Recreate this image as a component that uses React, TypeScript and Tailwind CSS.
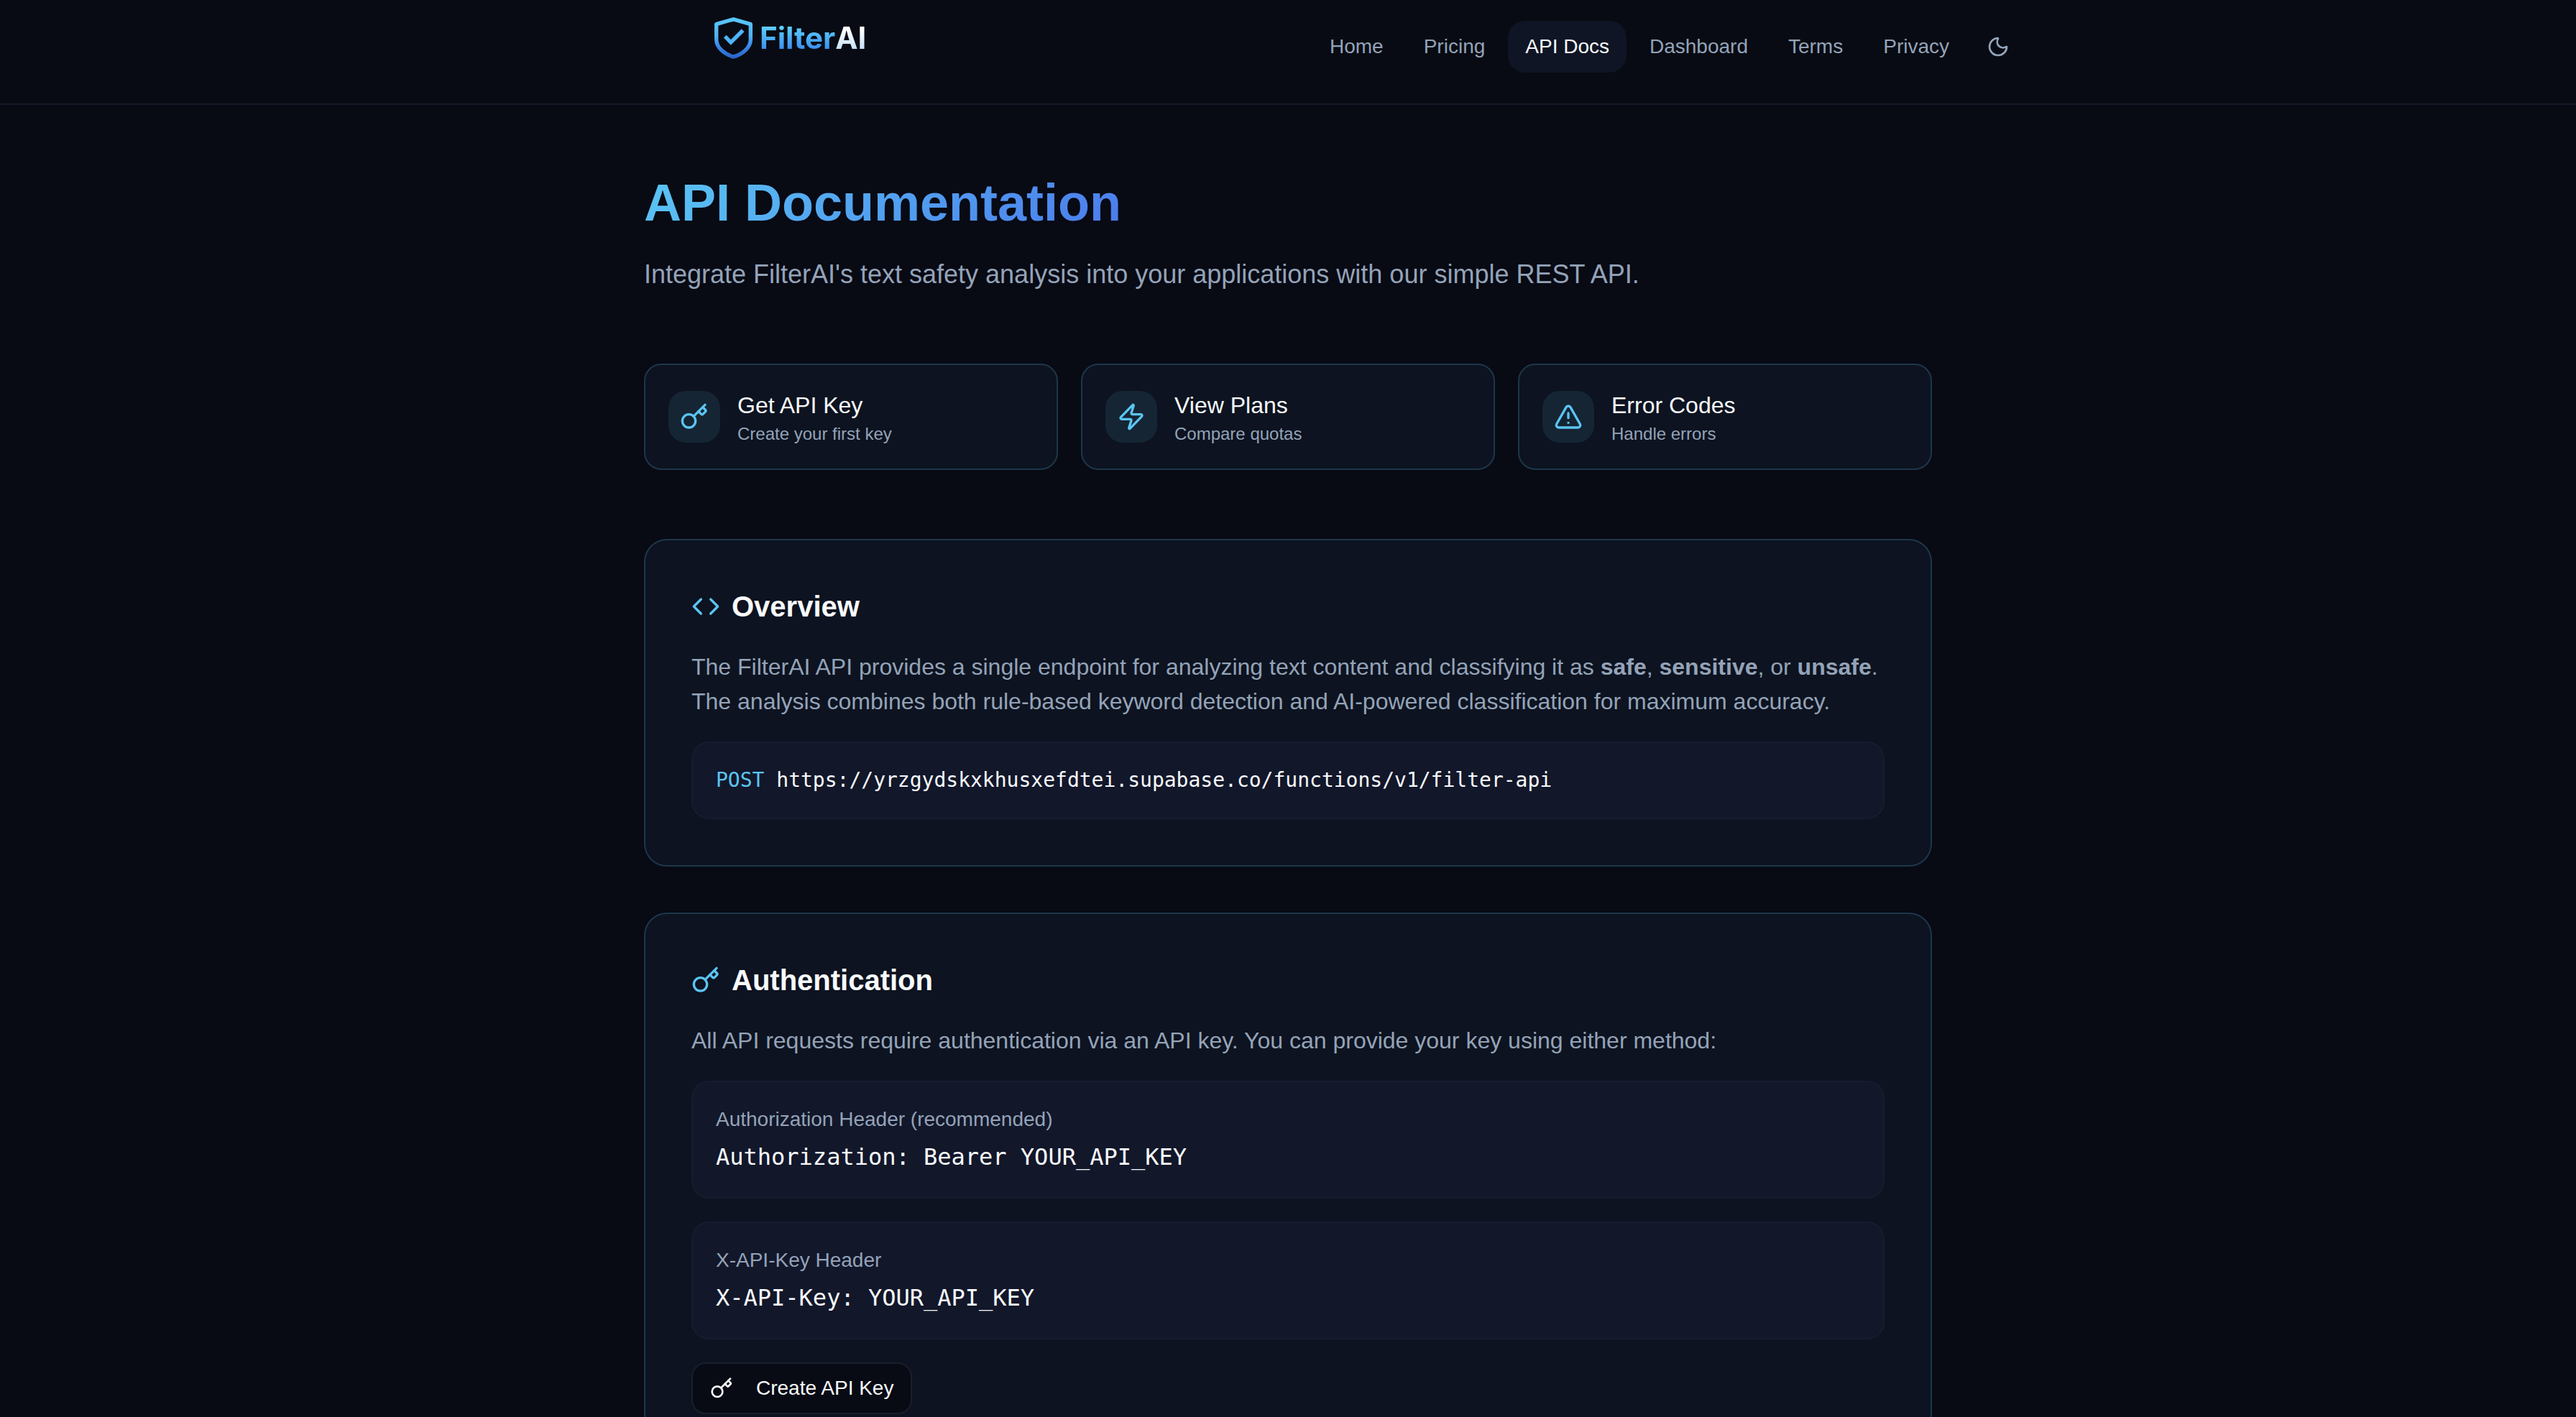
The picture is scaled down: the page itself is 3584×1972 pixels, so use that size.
import type { ReactNode } from 'react'
import { Code, Key, Moon, TriangleAlert, Zap, type LucideIcon } from 'lucide-react'

const navLinks = [
  { label: 'Home', href: '#home' },
  { label: 'Pricing', href: '#pricing' },
  { label: 'API Docs', href: '#docs', active: true },
  { label: 'Dashboard', href: '#dashboard' },
  { label: 'Terms', href: '#terms' },
  { label: 'Privacy', href: '#privacy' },
]

const quickLinks = [
  { icon: Key, title: 'Get API Key', desc: 'Create your first key', href: '#keys' },
  { icon: Zap, title: 'View Plans', desc: 'Compare quotas', href: '#plans' },
  { icon: TriangleAlert, title: 'Error Codes', desc: 'Handle errors', href: '#errors' },
]

const authMethods = [
  { label: 'Authorization Header (recommended)', code: 'Authorization: Bearer YOUR_API_KEY' },
  { label: 'X-API-Key Header', code: 'X-API-Key: YOUR_API_KEY' },
]

function Logo() {
  return (
    <a href="#home" className="mt-6 ml-[226px] flex items-center gap-2.5">
      <svg width="53" height="58" viewBox="0 0 158 172" fill="none" aria-hidden="true">
        <defs>
          <linearGradient id="shield" x1="0" y1="0" x2="0" y2="172" gradientUnits="userSpaceOnUse">
            <stop offset="0" stopColor="#5ac8fa" />
            <stop offset="0.45" stopColor="#4fb0f6" />
            <stop offset="0.7" stopColor="#3a86e8" />
            <stop offset="1" stopColor="#2760c4" />
          </linearGradient>
        </defs>
        <path
          d="M79 8 L150 28 V92 C150 126 116 153 79 164 C42 153 8 126 8 92 V28 Z"
          stroke="url(#shield)"
          strokeWidth="16"
          strokeLinejoin="round"
        />
        <path d="M44 79 L68 104 L118 54" stroke="#4fb4f8" strokeWidth="16" />
      </svg>
      <span className="flex font-[Inter,sans-serif] text-[42px] leading-[56px] font-bold">
        <span className="bg-linear-to-b from-[#5fd0fc] from-20% to-[#3b8cf0] to-80% bg-clip-text text-transparent">
          Filter
        </span>
        <span className="bg-linear-to-b from-white from-30% to-[#bfe0f6] to-80% bg-clip-text text-transparent">
          AI
        </span>
      </span>
    </a>
  )
}

function Section({ icon: Icon, title, children }: { icon: LucideIcon; title: string; children: ReactNode }) {
  return (
    <section className="flex flex-col items-start gap-8 rounded-[32px] border-2 border-[#1d374a] bg-[#0d1320] p-16">
      <h2 className="flex items-center gap-4 text-[40px] leading-14 font-bold">
        <Icon className="size-10 text-[#5bc5f2]" />
        {title}
      </h2>
      {children}
    </section>
  )
}

export default function App() {
  return (
    <div className="min-h-screen bg-[#080a14] font-['Liberation_Sans',Arial,sans-serif] text-[32px] leading-12 text-[#f8fafc]">
      <header className="border-b-2 border-[#141b28] bg-[#080b13]">
        <div className="mx-auto flex h-36 max-w-[2048px] items-start justify-between">
          <Logo />
          <nav className="flex items-center gap-2 pt-[29px] text-[28px] leading-10">
            {navLinks.map(({ label, href, active }) => (
              <a
                key={label}
                href={href}
                className={
                  active
                    ? 'rounded-3xl bg-[#0f1524] px-6 py-4 font-medium text-[#f8fafc]'
                    : 'rounded-3xl px-6 py-4 font-medium text-[#94a3b8] hover:text-[#f8fafc]'
                }
              >
                {label}
              </a>
            ))}
            <button
              type="button"
              aria-label="Toggle theme"
              className="flex size-18 items-center justify-center rounded-3xl text-[#94a3b8]"
            >
              <Moon className="size-8" />
            </button>
          </nav>
        </div>
      </header>

      <main className="mx-auto max-w-[1792px] pt-24 pb-24">
        <h1 className="w-fit bg-linear-135 from-[#5bc5f2] to-[#4b7bec] bg-clip-text text-[72px] leading-20 font-bold text-transparent">
          API Documentation
        </h1>
        <p className="mt-8 text-[36px] leading-14 text-[#94a3b8]">
          Integrate FilterAI's text safety analysis into your applications with our simple REST API.
        </p>

        <div className="mt-24 grid grid-cols-3 gap-8">
          {quickLinks.map(({ icon: Icon, title, desc, href }) => (
            <a
              key={title}
              href={href}
              className="flex items-center gap-6 rounded-3xl border-2 border-[#1d374a] bg-[#0d1320] p-8"
            >
              <span className="flex size-18 items-center justify-center rounded-3xl bg-[#152534]">
                <Icon className="size-10 text-[#5bc5f2]" />
              </span>
              <span className="flex flex-col">
                <span className="font-medium">{title}</span>
                <span className="text-[24px] leading-8 text-[#94a3b8]">{desc}</span>
              </span>
            </a>
          ))}
        </div>

        <div className="mt-24 flex flex-col gap-16">
          <Section icon={Code} title="Overview">
            <p className="text-[#94a3b8]">
              The FilterAI API provides a single endpoint for analyzing text content and classifying it as{' '}
              <strong>safe</strong>, <strong>sensitive</strong>, or <strong>unsafe</strong>. The analysis combines
              both rule-based keyword detection and AI-powered classification for maximum accuracy.
            </p>
            <div className="w-full rounded-3xl border-2 border-[#171c2e] bg-[#12172a] p-8 font-['DejaVu_Sans_Mono',monospace] text-[28px] leading-10">
              <span className="text-[#5bc5f2]">POST</span>{' '}
              https://yrzgydskxkhusxefdtei.supabase.co/functions/v1/filter-api
            </div>
          </Section>

          <Section icon={Key} title="Authentication">
            <p className="text-[#94a3b8]">
              All API requests require authentication via an API key. You can provide your key using either method:
            </p>
            {authMethods.map(({ label, code }) => (
              <div key={label} className="w-full rounded-3xl border-2 border-[#171c2e] bg-[#12172a] p-8">
                <p className="mb-2 text-[28px] leading-10 text-[#94a3b8]">{label}</p>
                <code className="block font-['DejaVu_Sans_Mono',monospace]">{code}</code>
              </div>
            ))}
            <button
              type="button"
              className="flex h-18 items-center gap-8 rounded-[20px] border-2 border-[#1a1f2d] bg-[#080a14] px-6 text-[28px] leading-10 font-medium"
            >
              <Key className="size-8" />
              Create API Key
            </button>
          </Section>
        </div>
      </main>
    </div>
  )
}
